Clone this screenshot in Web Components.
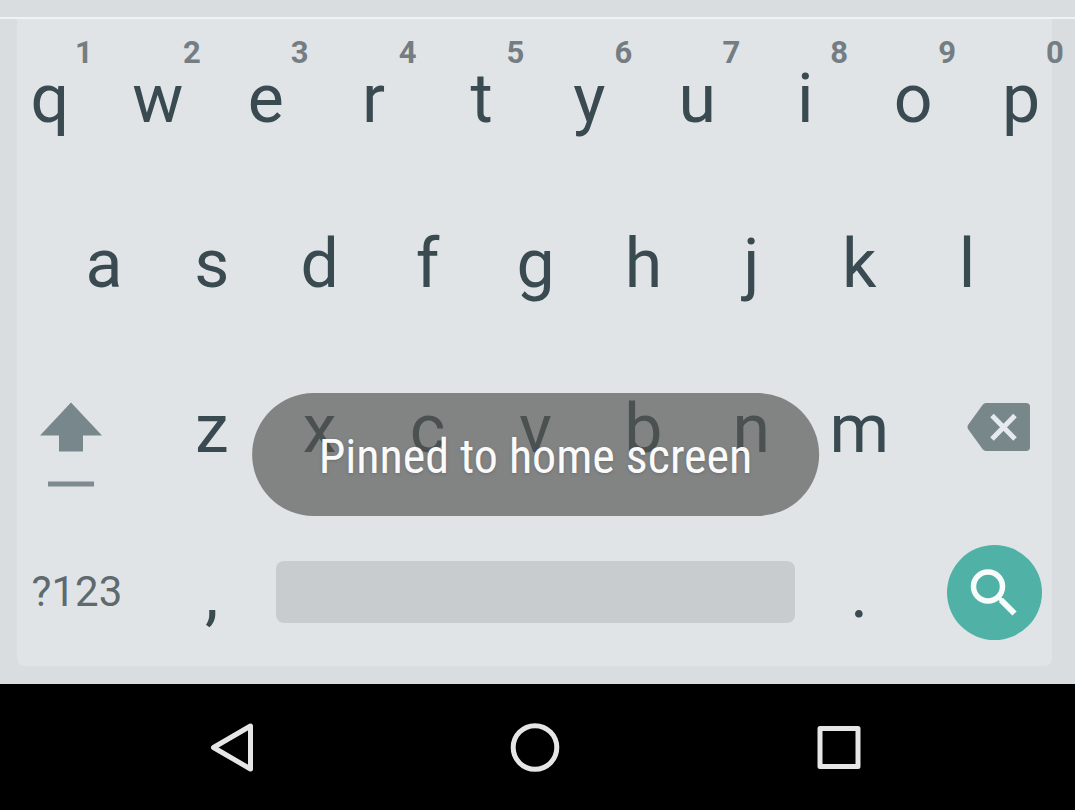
<!DOCTYPE html>
<html lang="en">
<head>
<meta charset="utf-8">
<meta name="viewport" content="width=device-width, initial-scale=1">
<title>Keyboard</title>
<style>
  body { margin: 0; background: #000; font-family: Roboto, "Liberation Sans", sans-serif; overflow-x: hidden; }
</style>
</head>
<body>
<phone-screen>
  <soft-keyboard>
    <key-row>
      <letter-key hint="1">q</letter-key><letter-key hint="2">w</letter-key><letter-key hint="3">e</letter-key><letter-key hint="4">r</letter-key><letter-key hint="5">t</letter-key><letter-key hint="6">y</letter-key><letter-key hint="7">u</letter-key><letter-key hint="8">i</letter-key><letter-key hint="9">o</letter-key><letter-key hint="0">p</letter-key>
    </key-row>
    <key-row inset>
      <letter-key>a</letter-key><letter-key>s</letter-key><letter-key>d</letter-key><letter-key>f</letter-key><letter-key>g</letter-key><letter-key>h</letter-key><letter-key>j</letter-key><letter-key>k</letter-key><letter-key>l</letter-key>
    </key-row>
    <key-row>
      <action-key kind="shift" label="Shift">
        <svg width="62" height="120" viewBox="0 0 62 120" fill="#78878c"><path d="M31 35.500 62 68.500H43V84.500H19V68.500H0z"/><path d="M8 114.500h46v5H8z" fill="#7f8b91"/></svg>
      </action-key>
      <letter-key>z</letter-key><letter-key>x</letter-key><letter-key>c</letter-key><letter-key>v</letter-key><letter-key>b</letter-key><letter-key>n</letter-key><letter-key>m</letter-key>
      <action-key kind="delete" label="Delete">
        <svg width="64" height="48" viewBox="0 0 64 48"><path d="M19 0h40q4 0 4 4v40q0 4-4 4H19q-2 0-3.500-2L1 26q-1-2 0-4L15.500 2Q17 0 19 0z" fill="#78878a"/><path d="M25 12.500 48 36M48 12.500 25 36" stroke="#e6e9ed" stroke-width="5" fill="none"/></svg>
      </action-key>
    </key-row>
    <key-row>
      <action-key kind="symbols">?123</action-key>
      <letter-key>,</letter-key>
      <action-key kind="space" label="Space"></action-key>
      <letter-key>.</letter-key>
      <action-key kind="search" label="Search">
        <svg width="95" height="95" viewBox="0 0 95 95" fill="none" stroke="#f8fdfc"><circle cx="41" cy="41.500" r="14.500" stroke-width="5.500"/><path d="M51 52 55 55.500" stroke-width="4"/><path d="M54 55 67.500 68.500" stroke-width="6"/></svg>
      </action-key>
    </key-row>
  </soft-keyboard>
  <toast-message slot="toast">Pinned to home screen</toast-message>
  <navigation-bar></navigation-bar>
</phone-screen>

<script>
const define = (name, html, setup) => {
  const template = document.createElement('template');
  template.innerHTML = html;
  customElements.define(name, class extends HTMLElement {
    constructor() {
      super();
      this.attachShadow({ mode: 'open' }).append(template.content.cloneNode(true));
    }
    connectedCallback() { if (setup) setup(this, this.shadowRoot); }
  });
};

define('phone-screen', `
  <style>
    :host { display: flex; flex-direction: column; min-height: 100vh; margin-left: -4px; position: relative; }
    ::slotted(navigation-bar) { flex: 1; }
  </style>
  <slot></slot><slot name="toast"></slot>`);

define('soft-keyboard', `
  <style>
    :host { display: block; position: relative; padding: 18px 0 6px; background: #dadde0; overflow: hidden; }
    .panel { position: absolute; inset: 0 23px 18px 21px; background: #e1e4e7; border-radius: 0 0 8px 8px; }
    .strip { position: absolute; inset: 0 0 auto; height: 17px; background: #dadde0; border-bottom: 2px solid #eff3f5; }
    .keys { position: relative; }
  </style>
  <div class="panel"></div><div class="strip"></div>
  <div class="keys"><slot></slot></div>`);

define('key-row', `
  <style>
    :host { display: grid; grid-template-columns: repeat(20, minmax(0, 1fr)); height: 165px; }
    :host([inset]) ::slotted(:first-child) { grid-column: 2 / span 2; }
  </style>
  <slot></slot>`);

define('letter-key', `
  <style>
    :host { display: block; grid-column: span 2; position: relative; }
    button { display: block; width: 100%; height: 100%; border: 0; padding: 0 0 3px; background: none; color: #3a4a51; font: 400 68px/162px Roboto, "Liberation Sans", sans-serif; }
    .hint { position: absolute; top: 17px; right: 0; width: 40px; text-align: center; font: 700 31px/36px Roboto, "Liberation Sans", sans-serif; color: #747d81; pointer-events: none; }
  </style>
  <button type="button"><slot></slot></button><span class="hint"></span>`,
  (host, root) => {
    const hint = root.querySelector('.hint');
    if (host.hasAttribute('hint')) hint.textContent = host.getAttribute('hint');
    else hint.hidden = true;
  });

define('action-key', `
  <style>
    :host { display: flex; grid-column: span 3; align-items: center; justify-content: center; padding-bottom: 8px; }
    :host([kind="shift"]) { padding-right: 12px; }
    :host([kind="delete"]) { padding-left: 10px; }
    :host([kind="space"]) { grid-column: span 10; padding-left: 10px; padding-right: 10px; }
    :host([kind="search"]) { padding-bottom: 6px; }
    button { display: flex; align-items: center; justify-content: center; border: 0; padding: 0; background: none; color: #5e6a6d; font: 400 42px/48px Roboto, "Liberation Sans", sans-serif; }
    :host([kind="space"]) button { width: 100%; height: 62px; background: #c9cccf; border-radius: 8px; }
    :host([kind="search"]) button { width: 95px; height: 95px; border-radius: 50%; background: #50b1a6; }
    ::slotted(svg) { display: block; }
  </style>
  <button type="button"><slot></slot></button>`,
  (host, root) => {
    if (host.hasAttribute('label')) root.querySelector('button').setAttribute('aria-label', host.getAttribute('label'));
  });

define('toast-message', `
  <style>
    :host { position: absolute; top: 393px; left: 50%; transform: translateX(-50%); pointer-events: none; }
    div { box-sizing: border-box; height: 123px; padding: 0 67px; border-radius: 62px; background: rgba(83, 84, 82, .67); color: #fafafa; font: 400 48px/128px "Roboto Condensed", Roboto, "Liberation Sans", sans-serif; white-space: nowrap; text-shadow: 0 1px 3px rgba(60, 60, 60, .3); }
  </style>
  <div role="status"><slot></slot></div>`);

define('navigation-bar', `
  <style>
    :host { display: block; background: #000; }
    nav { display: grid; grid-template-columns: repeat(3, 1fr); box-sizing: border-box; height: 100%; min-height: 126px; padding: 0 84px; }
    button { display: grid; place-items: center; border: 0; padding: 0; background: none; }
    svg { fill: none; stroke: #e6e6e6; stroke-width: 5; stroke-linejoin: round; }
  </style>
  <nav aria-label="System">
    <button type="button" aria-label="Back"><svg width="50" height="50" viewBox="0 0 50 50"><path d="M6.500 25.500 43.500 4V47z"/></svg></button>
    <button type="button" aria-label="Home"><svg width="50" height="50" viewBox="0 0 50 50"><circle cx="25" cy="25.500" r="21.800"/></svg></button>
    <button type="button" aria-label="Recent apps"><svg width="50" height="50" viewBox="0 0 50 50"><path d="M6 6.500H44V44.500H6z"/></svg></button>
  </nav>`);
</script>
</body>
</html>
